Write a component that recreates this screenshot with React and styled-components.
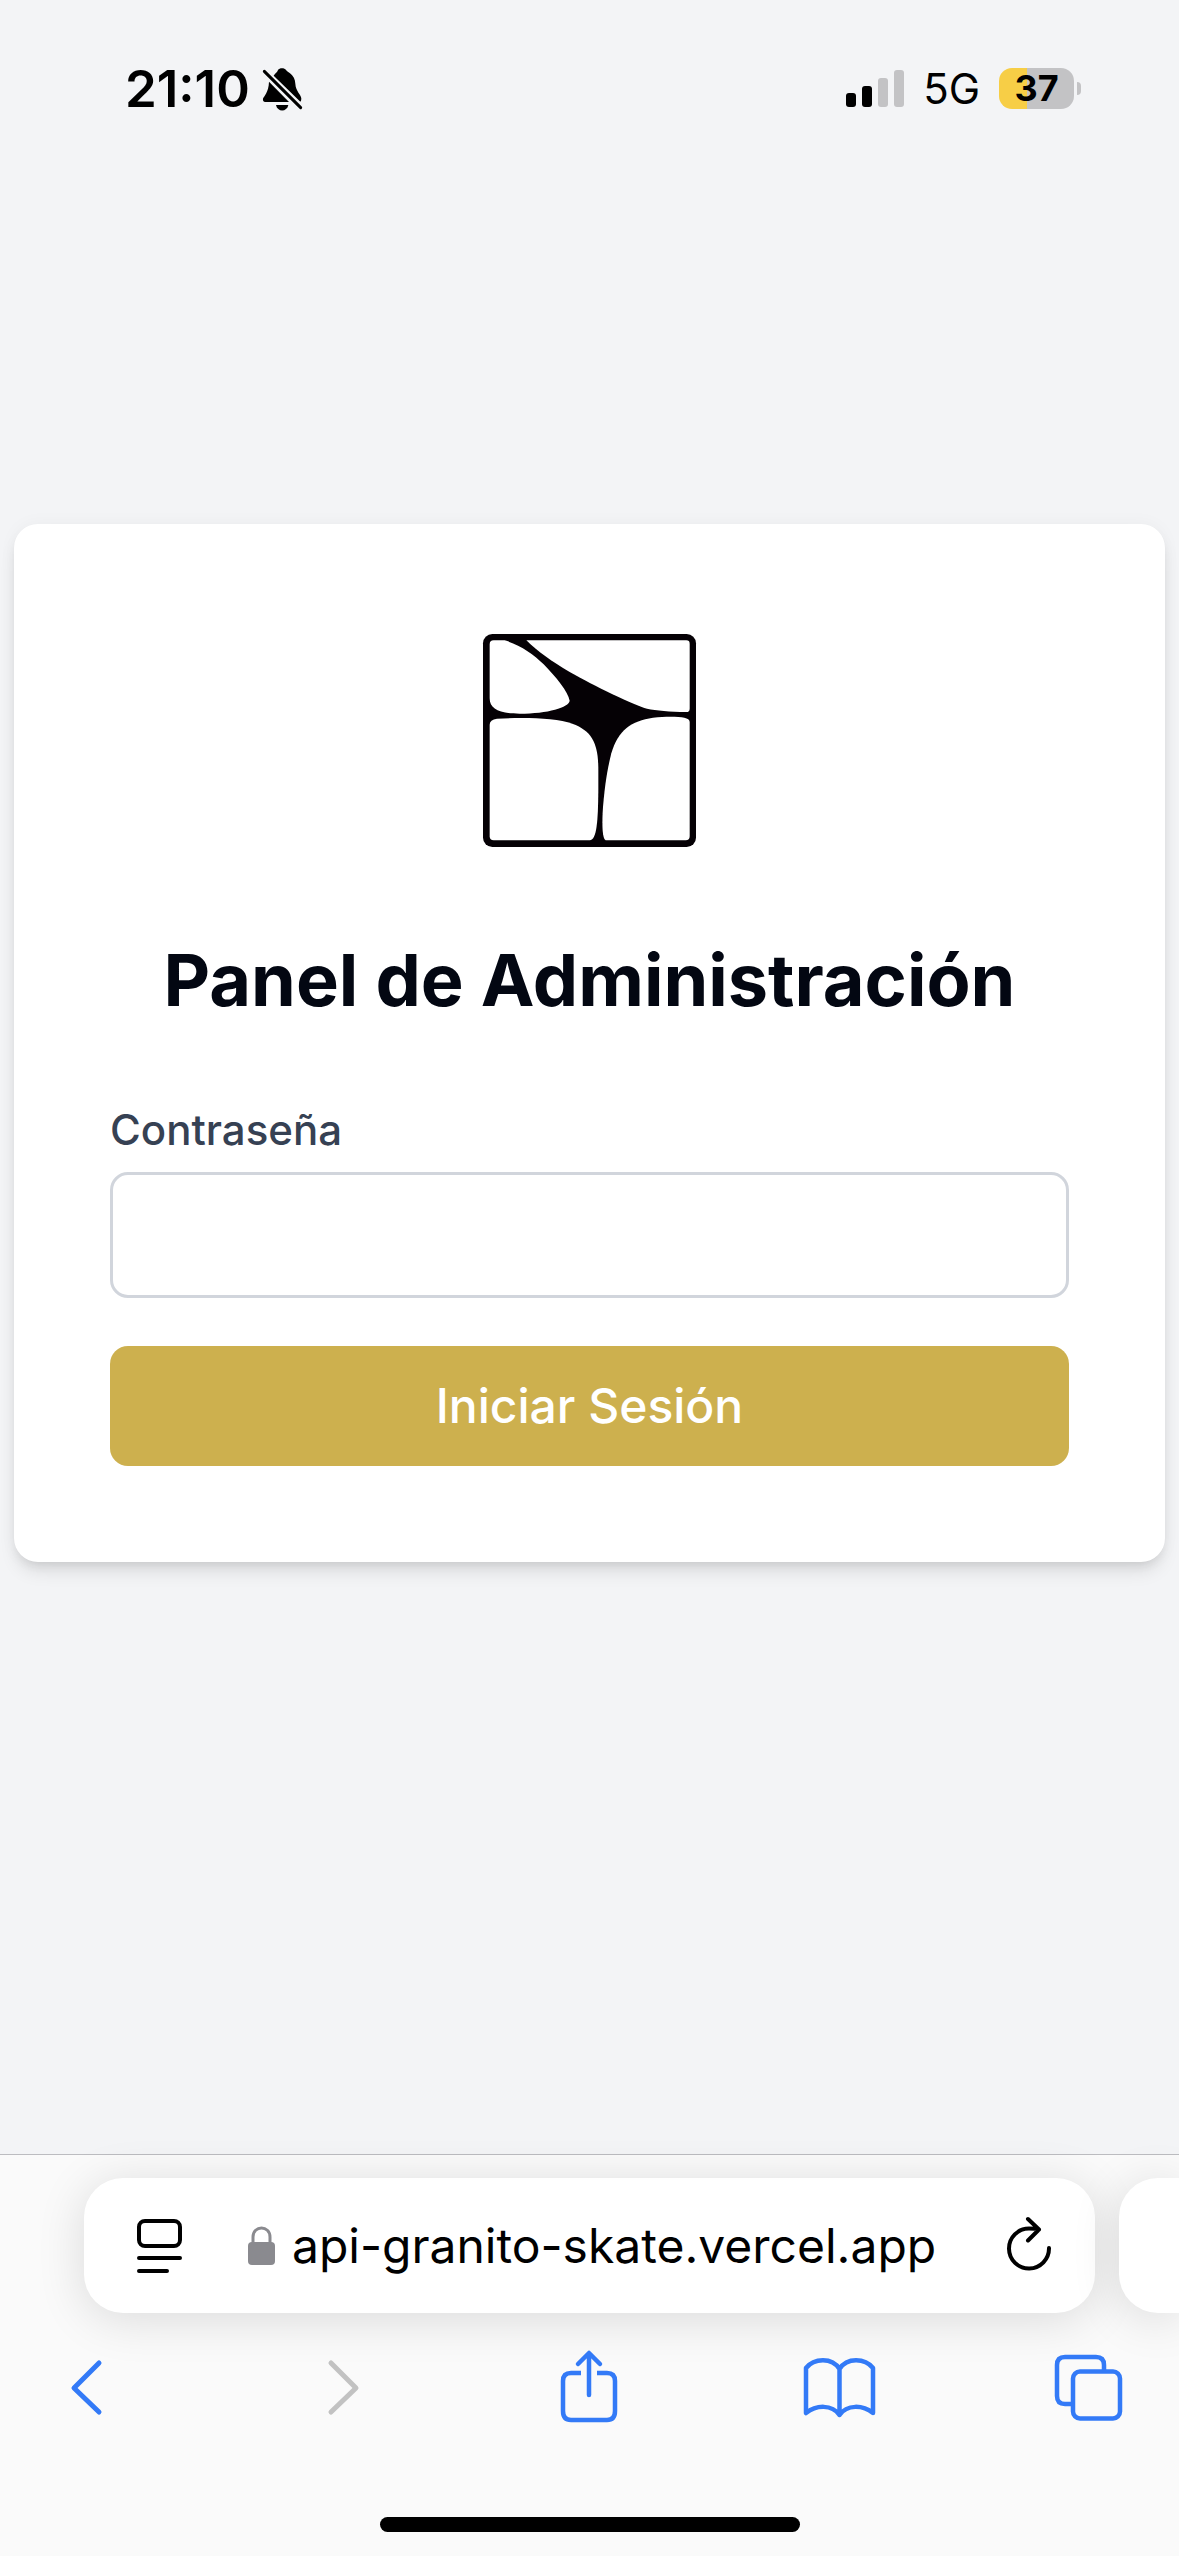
import React from "react";
import styled, { createGlobalStyle } from "styled-components";

const GlobalStyle = createGlobalStyle`
  *, *::before, *::after { box-sizing: border-box; }
  body {
    margin: 0;
    background: #f3f4f6;
    color: #030712;
    font-family: Inter, "Liberation Sans", sans-serif;
    -webkit-font-smoothing: antialiased;
  }
  button, input { font: inherit; color: inherit; margin: 0; }
`;

const Page = styled.div`
  display: flex;
  flex-direction: column;
  min-height: 100vh;
`;

const StatusBar = styled.header`
  display: flex;
  justify-content: space-between;
  align-items: center;
  height: 177px;
  padding: 0 98px 0 125px;
  color: #000;
`;

const StatusGroup = styled.div`
  display: flex;
  align-items: center;
  gap: ${(p) => p.$gap}px;
`;

const Time = styled.time`
  font-size: 51px;
  line-height: 60px;
  font-weight: 600;
`;

const Network = styled.span`
  font-size: 42px;
  line-height: 48px;
`;

const Battery = styled.div`
  display: flex;
  align-items: center;
  gap: 3px;
`;

const BatteryBody = styled.div`
  display: flex;
  align-items: center;
  justify-content: center;
  width: 75px;
  height: 41px;
  border-radius: 13px;
  background: linear-gradient(to right, #f7ce46 37%, #c3c3c5 37%);
  font-size: 36px;
  line-height: 41px;
  font-weight: 700;
`;

const BatteryNub = styled.div`
  width: 4px;
  height: 13px;
  border-radius: 0 6px 6px 0;
  background: #c3c3c5;
`;

const Icon = styled.svg`
  display: block;
  flex: none;
  overflow: visible;
`;

const Main = styled.main`
  flex: 1;
  display: flex;
  align-items: center;
  justify-content: center;
  padding: 0 14px 245px;
`;

const Card = styled.section`
  display: flex;
  flex-direction: column;
  flex: 1;
  max-width: 1344px;
  padding: 96px;
  border-radius: 24px;
  background: #fff;
  box-shadow: 0 12px 18px -3px rgba(0, 0, 0, 0.1), 0 6px 12px -6px rgba(0, 0, 0, 0.1),
    0 0 18px rgba(0, 0, 0, 0.04);
`;

const LogoBox = styled.div`
  display: flex;
  align-items: center;
  justify-content: center;
  height: 240px;
  margin-bottom: 72px;
`;

const Title = styled.h1`
  margin: 0 0 72px;
  font-size: 72px;
  line-height: 96px;
  font-weight: 700;
  text-align: center;
`;

const Form = styled.form`
  display: flex;
  flex-direction: column;
  gap: 48px;
`;

const Field = styled.div`
  display: flex;
  flex-direction: column;
  gap: 12px;
`;

const Label = styled.label`
  color: #364153;
  font-size: 42px;
  line-height: 60px;
  font-weight: 500;
`;

const PasswordInput = styled.input`
  width: 100%;
  height: 126px;
  padding: 0 36px;
  border: 3px solid #d1d5dc;
  border-radius: 18px;
  background: #fff;
  font-size: 48px;
  outline: none;
`;

const SubmitButton = styled.button`
  height: 120px;
  border: 0;
  border-radius: 18px;
  background: #cdb04e;
  color: #fff;
  font-size: 48px;
  line-height: 72px;
  font-weight: 500;
`;

const BrowserBar = styled.footer`
  display: flex;
  flex-direction: column;
  border-top: 1px solid #bcbcc0;
  background: #fafafa;
  padding: 23px 0 24px;
`;

const TabStrip = styled.div`
  display: flex;
  gap: 24px;
  height: 135px;
  padding-left: 84px;
`;

const AddressBar = styled.div`
  display: flex;
  align-items: center;
  flex: 1;
  min-width: 0;
  padding: 0 43px 0 52px;
  border-radius: 39px;
  background: #fff;
  color: #000;
  box-shadow: 0 6px 48px rgba(0, 0, 0, 0.13);
`;

const NextTab = styled.div`
  flex: 0 0 60px;
  border-radius: 39px 0 0 39px;
  background: #fff;
  box-shadow: 0 6px 48px rgba(0, 0, 0, 0.13);
`;

const UrlGroup = styled.label`
  display: flex;
  align-items: center;
  flex: 1;
  min-width: 0;
  gap: 16px;
  padding-left: 66px;
`;

const UrlInput = styled.input`
  flex: 1;
  min-width: 0;
  height: 72px;
  padding: 0;
  border: 0;
  background: transparent;
  font-size: 48px;
  outline: none;
`;

const IconButton = styled.button`
  display: flex;
  padding: 0;
  border: 0;
  background: none;
  color: inherit;
`;

const Toolbar = styled.nav`
  display: flex;
  justify-content: space-between;
  padding: 38px 54px 0 51px;
  color: #337af7;
`;

const HomeIndicator = styled.div`
  align-self: center;
  width: 420px;
  height: 15px;
  margin-top: 94px;
  border-radius: 8px;
  background: #000;
`;

const BellOff = () => (
  <Icon width="41" height="44" viewBox="486 48 123 132" aria-label="Silencio">
    <path d="M521 74C526 66 532 64 534 57C538 50 554 50 558 57C561 63 585 70 586 98C587 122 604 130 604 143C604 147 603 150 601 152Z" />
    <path d="M507 92L567 153H496C490 153 488 148 489 143C491 136 506 125 507 92Z" />
    <path d="M528 162H565C561 184 532 184 528 162Z" />
    <path d="M493 61L602 170" stroke="#000" strokeWidth="9" strokeLinecap="round" />
  </Icon>
);

const SIGNAL = [
  { height: 14, on: true },
  { height: 21, on: true },
  { height: 29, on: false },
  { height: 37, on: false },
];

const Signal = () => (
  <Icon width="58" height="37" viewBox="0 0 58 37" aria-label="Cobertura">
    {SIGNAL.map((bar, i) => (
      <rect
        key={bar.height}
        x={i * 16}
        y={37 - bar.height}
        width="10"
        height={bar.height}
        rx="3"
        fill={bar.on ? "#000" : "#c3c3c5"}
      />
    ))}
  </Icon>
);

const Logo = () => (
  <Icon width="213" height="213" viewBox="70 42 639 639" role="img" aria-label="Granito Skate">
    <rect x="70" y="42" width="639" height="639" rx="28" fill="#050105" />
    <g fill="#fff">
      <path d="M102 61H135C180 74 222 102 252 133C290 172 325 215 330 242C328 262 265 281 180 281C120 281 90 268 90 235V73Q90 61 102 61Z" />
      <path d="M200 61H680Q690 61 690 71V266Q690 276 680 276C630 275 590 272 562 266C525 257 400 196 330 156C275 123 235 96 200 61Z" />
      <path d="M90 315Q90 298 112 296C200 292 290 294 338 311C400 333 416 375 416 450V510C415 600 412 660 390 661H102Q90 661 90 649Z" />
      <path d="M690 305V649Q690 661 678 661H438C425 655 428 590 430 560C437 480 445 440 455 400C475 330 515 303 580 293C640 288 690 290 690 305Z" />
    </g>
  </Icon>
);

const Stroke = ({ children, strokeWidth = 5, ...rest }) => (
  <Icon
    fill="none"
    stroke="currentColor"
    strokeWidth={strokeWidth}
    strokeLinecap="round"
    strokeLinejoin="round"
    aria-hidden="true"
    {...rest}
  >
    {children}
  </Icon>
);

const ReaderIcon = () => (
  <Stroke width="46" height="54" viewBox="0 0 46 54" strokeWidth={4}>
    <rect x="3" y="2" width="41" height="25" rx="6" />
    <path d="M3 39H44M3 52H31" />
  </Stroke>
);

const LockIcon = () => (
  <Icon width="28" height="39" viewBox="0 0 28 39" aria-hidden="true">
    <rect y="16" width="27" height="23" rx="4" fill="#8a8a8f" />
    <path d="M5 18V11C5 -1 22 -1 22 11V18" fill="none" stroke="#8a8a8f" strokeWidth="3" />
  </Icon>
);

const ReloadIcon = () => (
  <Stroke width="46" height="54" viewBox="0 0 46 54" strokeWidth={4}>
    <path d="M43 29A20 20 0 1 1 23 9.5C27 9.5 30 9.5 33 10.5M22 0L33 10.5L22 21.5" />
  </Stroke>
);

const BackIcon = () => (
  <Stroke width="72" height="72" viewBox="51 2351 72 72">
    <path d="M99 2363L74 2388L99 2412" />
  </Stroke>
);

const ForwardIcon = () => (
  <Stroke width="72" height="72" viewBox="302 2351 72 72">
    <path d="M331 2363L356 2388L331 2412" />
  </Stroke>
);

const ShareIcon = () => (
  <Stroke width="72" height="72" viewBox="552 2351 72 72">
    <path d="M589 2405M589 2395V2354M578 2364L589 2353L600 2364" strokeWidth="4.5" />
    <path
      d="M581 2373H571Q563 2373 563 2381V2411Q563 2420 571 2420H607Q615 2420 615 2411V2381Q615 2373 607 2373H597"
      strokeWidth="4.5"
      strokeLinecap="butt"
    />
  </Stroke>
);

const BookIcon = () => (
  <Stroke width="72" height="72" viewBox="803 2351 72 72" strokeWidth={4.5}>
    <path d="M839.5 2415C832 2404 816 2405 806 2413V2368C814 2358 832 2357 839.5 2369C847 2357 865 2358 873 2368V2413C863 2405 847 2404 839.5 2415ZV2369" />
  </Stroke>
);

const TabsIcon = () => (
  <Stroke width="72" height="72" viewBox="1053 2351 72 72" strokeWidth={4.5} strokeLinecap="butt">
    <rect x="1073" y="2371.5" width="47" height="47" rx="7" />
    <path d="M1071 2404H1065Q1057 2404 1057 2396V2365Q1057 2357 1065 2357H1096Q1104 2357 1104 2365V2370" />
  </Stroke>
);

const TOOLS = [
  { label: "Atrás", Glyph: BackIcon },
  { label: "Adelante", Glyph: ForwardIcon, disabled: true },
  { label: "Compartir", Glyph: ShareIcon },
  { label: "Marcadores", Glyph: BookIcon },
  { label: "Pestañas", Glyph: TabsIcon },
];

const ToolButton = styled(IconButton)`
  &:disabled {
    color: #c2c2c2;
  }
`;

export default function App() {
  return (
    <Page>
      <GlobalStyle />
      <StatusBar>
        <StatusGroup $gap={12}>
          <Time>21:10</Time>
          <BellOff />
        </StatusGroup>
        <StatusGroup $gap={19}>
          <Signal />
          <Network>5G</Network>
          <Battery>
            <BatteryBody>37</BatteryBody>
            <BatteryNub />
          </Battery>
        </StatusGroup>
      </StatusBar>

      <Main>
        <Card>
          <LogoBox>
            <Logo />
          </LogoBox>
          <Title>Panel de Administración</Title>
          <Form onSubmit={(e) => e.preventDefault()}>
            <Field>
              <Label htmlFor="password">Contraseña</Label>
              <PasswordInput id="password" type="password" />
            </Field>
            <SubmitButton type="submit">Iniciar Sesión</SubmitButton>
          </Form>
        </Card>
      </Main>

      <BrowserBar>
        <TabStrip>
          <AddressBar>
            <IconButton type="button" aria-label="Ajustes de página">
              <ReaderIcon />
            </IconButton>
            <UrlGroup>
              <LockIcon />
              <UrlInput type="text" aria-label="Dirección" defaultValue="api-granito-skate.vercel.app" />
            </UrlGroup>
            <IconButton type="button" aria-label="Recargar">
              <ReloadIcon />
            </IconButton>
          </AddressBar>
          <NextTab />
        </TabStrip>
        <Toolbar>
          {TOOLS.map(({ label, Glyph, disabled }) => (
            <ToolButton key={label} type="button" aria-label={label} disabled={disabled}>
              <Glyph />
            </ToolButton>
          ))}
        </Toolbar>
        <HomeIndicator />
      </BrowserBar>
    </Page>
  );
}
